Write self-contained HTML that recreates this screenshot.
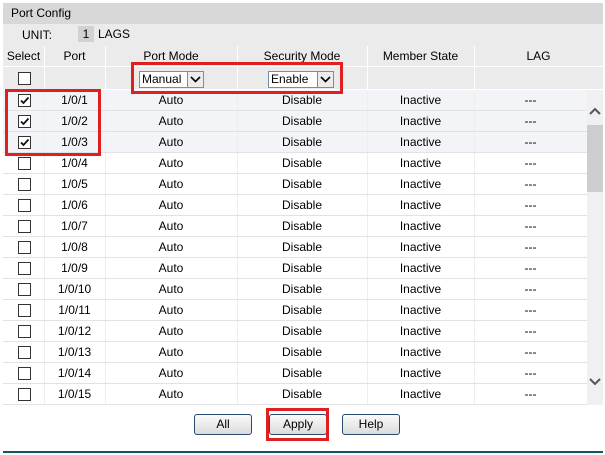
<!DOCTYPE html><html><head><style>
body{margin:0;width:605px;height:455px;background:#fff;font-family:"Liberation Sans",Arial,sans-serif;font-size:12px;color:#000;position:relative;overflow:hidden}
.a{position:absolute}
.t{left:3px;top:3px;width:600px;height:21px;background:#d8d8d8}
.u{left:3px;top:24px;width:600px;height:22px;background:#ebebeb}
.row{position:absolute;left:3px;width:584px;height:21px;border-bottom:1px solid #e2e2e2;box-sizing:border-box}
.c{position:absolute;top:0;height:100%;text-align:center;line-height:20px}
.cb{position:absolute;left:15px;top:4px;width:11px;height:11px;border:1px solid #333;background:#fff}
.cb svg{position:absolute;left:0;top:0}
.btn{position:absolute;top:414px;height:19px;border:1px solid #2b4a6f;border-radius:3px;background:linear-gradient(#fafafa,#dcdcdc);text-align:center;line-height:19px;font-size:12px}
.red{position:absolute;border:3px solid #e02020;box-sizing:border-box}
.sel{position:absolute;top:71px;height:15px;border:1px solid #7a8ea3;background:#fff;font-size:12px;line-height:15px;padding-left:2px;box-sizing:content-box}
.sel i{position:absolute;right:0;top:0;width:15px;height:15px;border-left:1px solid #7a8ea3;background:#ececec}
</style></head><body>
<div class="a t"><span class="a" style="left:8px;top:3px">Port Config</span></div>
<div class="a u"><span class="a" style="left:19px;top:4px">UNIT:</span><span class="a" style="left:75px;top:2px;width:16px;height:16px;background:#d2d2d2;text-align:center;line-height:16px">1</span><span class="a" style="left:95px;top:3px">LAGS</span></div>
<div class="row" style="top:46px;background:#ebebeb;height:21px;width:600px;border-bottom:1px solid #fff">
<div class="c" style="left:0;width:41px;border-right:1px solid #fff">Select</div>
<div class="c" style="left:41px;width:61px;border-right:1px solid #fff">Port</div>
<div class="c" style="left:102px;width:132px;border-right:1px solid #fff">Port Mode</div>
<div class="c" style="left:234px;width:130px;border-right:1px solid #fff">Security Mode</div>
<div class="c" style="left:364px;width:107px;border-right:1px solid #fff">Member State</div>
<div class="c" style="left:471px;width:129px">LAG</div></div>
<div class="row" style="top:67px;background:#ebebeb;height:23px;width:600px;border-bottom:1px solid #fff">
<div class="c" style="left:0;width:41px;border-right:1px solid #fff"></div>
<div class="c" style="left:41px;width:61px;border-right:1px solid #fff"></div>
<div class="c" style="left:102px;width:132px;border-right:1px solid #fff"></div>
<div class="c" style="left:234px;width:130px;border-right:1px solid #fff"></div>
<div class="c" style="left:364px;width:107px;border-right:1px solid #fff"></div>
<div class="cb" style="top:5px"></div></div>
<div class="sel" style="left:139px;width:61px">Manual<i><svg width="15" height="15"><path d="M3 5l4.5 4.5L12 5" fill="none" stroke="#000" stroke-width="1.6"/></svg></i></div>
<div class="sel" style="left:268px;width:62px">Enable<i><svg width="15" height="15"><path d="M3 5l4.5 4.5L12 5" fill="none" stroke="#000" stroke-width="1.6"/></svg></i></div>
<div id="rows"></div>
<div class="a" style="left:587px;top:90px;width:16px;height:315px;background:#f0f0f0"></div>
<div class="a" style="left:587px;top:125px;width:16px;height:67px;background:#cdcdcd"></div>
<svg class="a" style="left:587px;top:105px" width="16" height="12"><path d="M3 9l5-5 5 5" fill="none" stroke="#555" stroke-width="2"/></svg>
<svg class="a" style="left:587px;top:376px" width="16" height="12"><path d="M3 3l5 5 5-5" fill="none" stroke="#555" stroke-width="2"/></svg>
<div class="btn" style="left:194px;width:56px">All</div>
<div class="btn" style="left:269px;width:56px">Apply</div>
<div class="btn" style="left:342px;width:56px">Help</div>
<div class="red" style="left:5px;top:89px;width:96px;height:67px"></div>
<div class="red" style="left:131px;top:62px;width:212px;height:32px"></div>
<div class="red" style="left:266px;top:408px;width:63px;height:33px"></div>
<div class="a" style="left:3px;top:451px;width:600px;height:2px;background:#0e5a63"></div>
<script>
var h='';for(var i=0;i<15;i++){var y=90+21*i,ck=i<3;
h+='<div class="row" style="top:'+y+'px;background:'+(ck?'#f3f4f8':'#fff')+'">'+
'<div class="c" style="left:0;width:41px;border-right:1px solid #eee"><div class="cb">'+(ck?'<svg width="11" height="11"><path d="M2 5.5l2.5 2.5L9.5 2.5" fill="none" stroke="#111" stroke-width="1.8"/></svg>':'')+'</div></div>'+
'<div class="c" style="left:41px;width:61px;border-right:1px solid #eee">1/0/'+(i+1)+'</div>'+
'<div class="c" style="left:102px;width:132px;border-right:1px solid #eee">Auto</div>'+
'<div class="c" style="left:234px;width:130px;border-right:1px solid #eee">Disable</div>'+
'<div class="c" style="left:364px;width:107px;border-right:1px solid #eee">Inactive</div>'+
'<div class="c" style="left:471px;width:113px">---</div></div>';}
document.getElementById('rows').innerHTML=h;
</script>
</body></html>
